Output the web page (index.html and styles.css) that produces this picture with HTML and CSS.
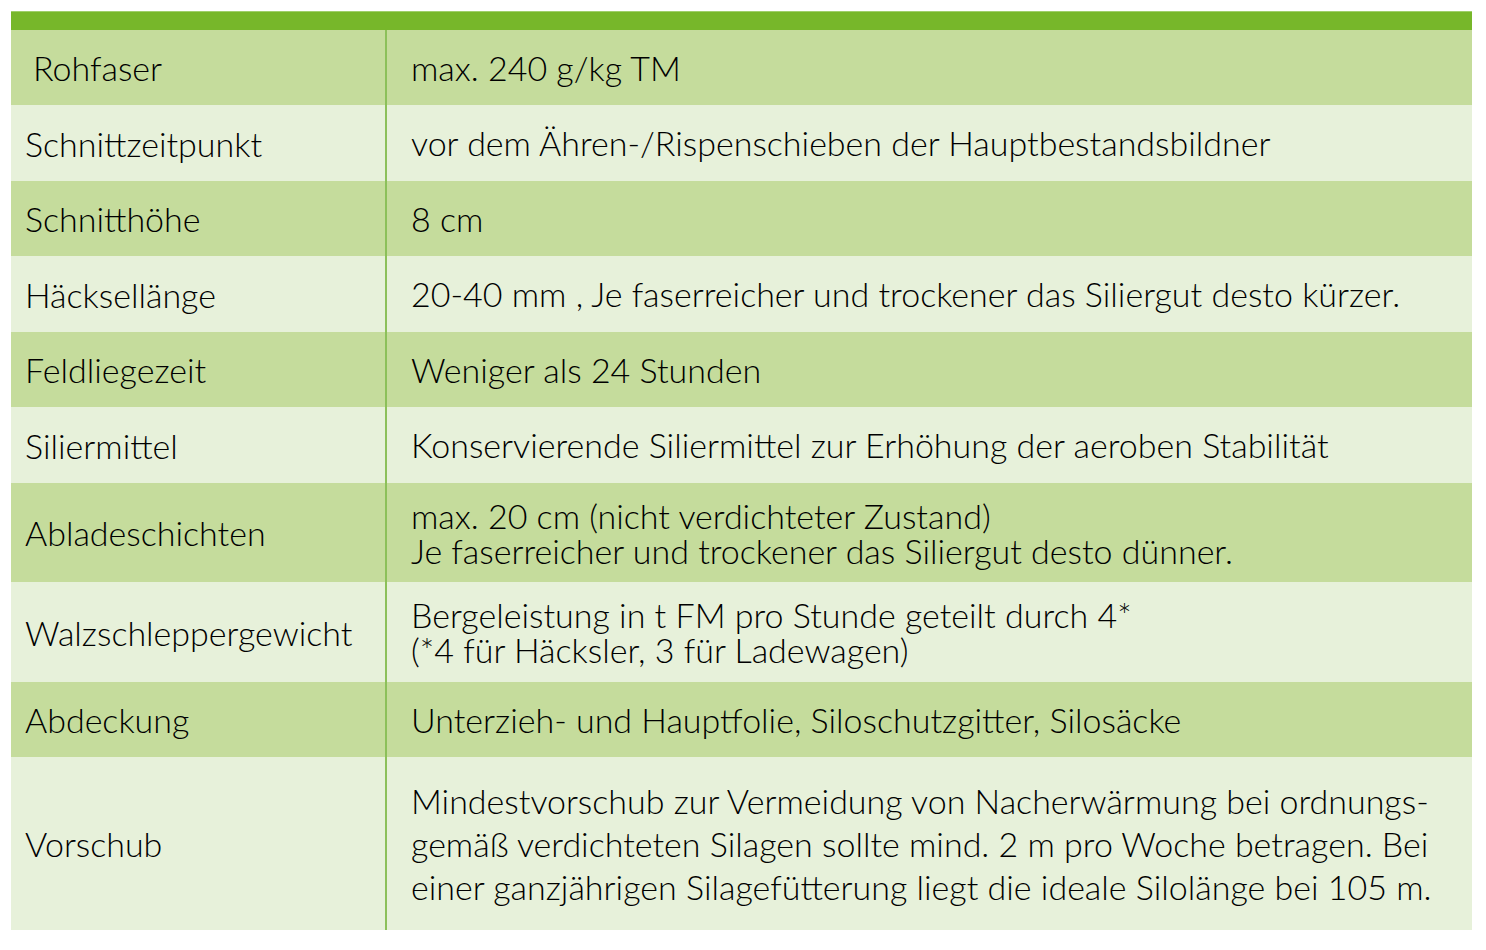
FILE: index.html
```html
<!DOCTYPE html>
<html lang="de">
<head>
<meta charset="utf-8">
<link rel="stylesheet" href="styles.css">
</head>
<body>
<div class="tbl">
  <div class="head"></div>
  <div class="row dark h75"><div class="k indent">Rohfaser</div><div class="v">max. 240 g/kg TM</div></div>
  <div class="row light h76"><div class="k">Schnittzeitpunkt</div><div class="v">vor dem Ähren-/Rispenschieben der Hauptbestandsbildner</div></div>
  <div class="row dark h75"><div class="k">Schnitthöhe</div><div class="v">8 cm</div></div>
  <div class="row light h76"><div class="k">Häcksellänge</div><div class="v">20-40 mm , Je faserreicher und trockener das Siliergut desto kürzer.</div></div>
  <div class="row dark h75"><div class="k">Feldliegezeit</div><div class="v">Weniger als 24 Stunden</div></div>
  <div class="row light h76"><div class="k">Siliermittel</div><div class="v">Konservierende Siliermittel zur Erhöhung der aeroben Stabilität</div></div>
  <div class="row dark h99"><div class="k">Abladeschichten</div><div class="v tight">max. 20 cm (nicht verdichteter Zustand)<br>Je faserreicher und trockener das Siliergut desto dünner.</div></div>
  <div class="row light h100"><div class="k">Walzschleppergewicht</div><div class="v tight">Bergeleistung in t FM pro Stunde geteilt durch 4*<br>(*4 für Häcksler, 3 für Ladewagen)</div></div>
  <div class="row dark h75"><div class="k">Abdeckung</div><div class="v">Unterzieh- und Hauptfolie, Siloschutzgitter, Silosäcke</div></div>
  <div class="row light h173"><div class="k">Vorschub</div><div class="v loose">Mindestvorschub zur Vermeidung von Nacherwärmung bei ordnungs-<br>gemäß verdichteten Silagen sollte mind. 2 m pro Woche betragen. Bei<br>einer ganzjährigen Silagefütterung liegt die ideale Silolänge bei 105 m.</div></div>
</div>
</body>
</html>
```
FILE: styles.css
```css
html, body { margin: 0; padding: 0; background: #ffffff; }
body { padding: 11px 14px 0 11px; font-family: Lato, "Open Sans", sans-serif; font-weight: 300; color: #000; }
.tbl { width: 1461px; }
.head { height: 18px; background: #77b72a; border-top: 1px solid #9fcf6a; }
.row { display: flex; }
.dark { background: #c5dc9c; }
.light { background: #e7f1da; }
.h75 { height: 75px; }
.h76 { height: 76px; }
.h99 { height: 99px; }
.h100 { height: 100px; }
.h173 { height: 173px; }
.k { box-sizing: border-box; width: 376px; flex: none; padding-left: 14px; border-right: 2px solid #8cc05a; display: flex; align-items: center; font-size: 34px; }
.k.indent { padding-left: 22px; }
.v { flex: 1; min-width: 0; padding-left: 24px; display: flex; align-items: center; font-size: 34px; line-height: 36px; }
.v.tight { line-height: 35px; }
.v.loose { line-height: 43px; }
```
